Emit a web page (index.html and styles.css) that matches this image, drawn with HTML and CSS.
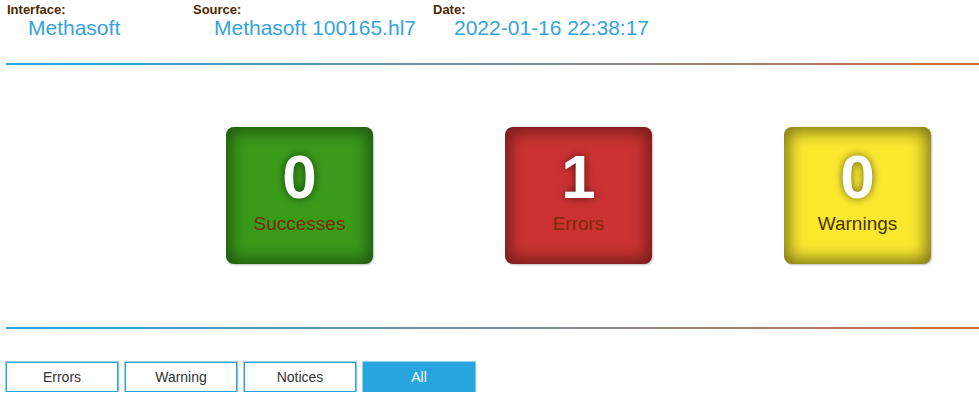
FILE: index.html
```html
<!DOCTYPE html>
<html>
<head>
<meta charset="utf-8">
<link rel="stylesheet" href="styles.css">
</head>
<body>
<div class="page">
  <div class="info">
    <div class="col c1">
      <div class="lbl">Interface:</div>
      <div class="val">Methasoft</div>
    </div>
    <div class="col c2">
      <div class="lbl">Source:</div>
      <div class="val">Methasoft 100165.hl7</div>
    </div>
    <div class="col c3">
      <div class="lbl">Date:</div>
      <div class="val">2022-01-16 22:38:17</div>
    </div>
  </div>
  <div class="rule rule-top"></div>
  <div class="stats">
    <div class="box green"><div class="num">0</div><div class="cap">Successes</div></div>
    <div class="box red"><div class="num">1</div><div class="cap">Errors</div></div>
    <div class="box yellow"><div class="num">0</div><div class="cap">Warnings</div></div>
  </div>
  <div class="rule rule-bottom"></div>
  <div class="filters">
    <button class="btn">Errors</button>
    <button class="btn">Warning</button>
    <button class="btn">Notices</button>
    <button class="btn active">All</button>
  </div>
</div>
</body>
</html>
```
FILE: styles.css
```css
html, body { margin: 0; padding: 0; background: #fff; }
body { font-family: "Liberation Sans", Arial, sans-serif; }
.page { padding-left: 6px; }
.info { display: grid; grid-template-columns: 186px 240px auto; padding-top: 3px; height: 60px; }
.col { padding-left: 1px; }
.lbl { font-size: 13px; font-weight: bold; color: #4d2a00; line-height: 14px; }
.val { font-size: 21px; color: #35a4dd; line-height: 22px; padding-left: 21px; }
.rule { height: 2px; background: linear-gradient(to right, #2aa3dc 0%, #8a8a8a 62%, #d4683d 100%); }
.stats { display: flex; gap: 132px; padding-left: 220px; padding-top: 62px; height: 200px; }
.box { width: 147px; height: 137px; border-radius: 8px; display: flex; flex-direction: column; align-items: center; box-sizing: border-box; padding-top: 14px; }
.green { background: #3a9b1b; box-shadow: inset 0 0 16px 5px rgba(0,0,0,0.45), 1px 1px 2px rgba(0,0,0,0.25); }
.red { background: #cc3232; box-shadow: inset 0 0 16px 5px rgba(0,0,0,0.45), 1px 1px 2px rgba(0,0,0,0.25); }
.yellow { background: #fbe930; box-shadow: inset 0 0 16px 5px rgba(0,0,0,0.5), 1px 1px 2px rgba(0,0,0,0.25); }
.num { font-size: 62px; font-weight: bold; color: #fff; line-height: 72px; text-shadow: 0 0 8px rgba(0,0,0,0.6); }
.cap { font-size: 19px; color: #7a2a05; line-height: 22px; }
.yellow .cap { color: #4a3300; }
.filters { display: flex; gap: 7px; padding-top: 33px; }
.btn { width: 112px; height: 30px; border: 1px solid #29a3dc; background: #fff; color: #333; font-family: "Liberation Sans", Arial, sans-serif; font-size: 14px; padding: 0; box-shadow: 0 0 0 1px rgba(41,163,220,0.45), 1px 1px 3px rgba(0,0,0,0.2); cursor: pointer; }
.btn.active { background: #27a5de; color: #fff; }
```
